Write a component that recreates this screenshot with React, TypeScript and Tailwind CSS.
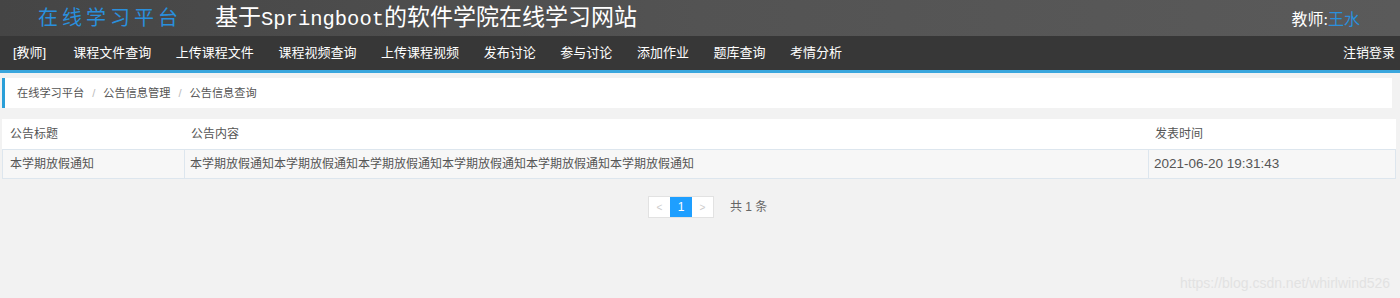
import React from 'react';

const navItems = ['课程文件查询', '上传课程文件', '课程视频查询', '上传课程视频', '发布讨论', '参与讨论', '添加作业', '题库查询', '考情分析'];

const crumbs = ['在线学习平台', '公告信息管理', '公告信息查询'];

const notices = [
  {
    title: '本学期放假通知',
    content: '本学期放假通知本学期放假通知本学期放假通知本学期放假通知本学期放假通知本学期放假通知',
    time: '2021-06-20 19:31:43',
  },
];

const App: React.FC = () => {
  return (
    <div className="w-[1400px] h-[298px] bg-[#f2f2f2] overflow-hidden relative font-['Liberation_Sans','Noto_Sans_CJK_SC',sans-serif]">
      {/* Header */}
      <div className="h-[36px] bg-gradient-to-r from-[#454545] via-[#535353] to-[#5a5a5a] flex items-center">
        <span className="ml-[38px] text-[20px] tracking-[4px] text-[#2a8fdc] font-['Liberation_Serif','Noto_Sans_CJK_SC',serif]">在线学习平台</span>
        <span className="ml-[33px] text-[23px] text-white font-['Liberation_Serif','Noto_Sans_CJK_SC',serif]">
          基于<span className="text-[20.5px] font-['Liberation_Mono','Noto_Sans_CJK_SC',monospace]">Springboot</span>的软件学院在线学习网站
        </span>
        <div className="ml-auto mr-[40px] mt-[4px] text-[16px] font-['Liberation_Serif','Noto_Sans_CJK_SC',serif]">
          <span className="text-white">教师:</span>
          <span className="text-[#2a8fdc]">王水</span>
        </div>
      </div>

      {/* Nav */}
      <div className="h-[34px] bg-[#373737] flex items-center text-white text-[13px]">
        <span className="ml-[13px]">[教师]</span>
        <div className="ml-[27px] flex gap-[24.6px]">
          {navItems.map(item => (
            <span key={item}>{item}</span>
          ))}
        </div>
        <span className="ml-auto mr-[5px]">注销登录</span>
      </div>
      <div className="h-[3px] bg-[#3aa6dd]" />

      {/* Breadcrumb */}
      <div className="mt-[5px] ml-[2px] w-[1390px] h-[30px] bg-white border-l-[3px] border-[#2a9fd8] flex items-center pl-[12px] text-[11.2px] text-[#555]">
        {crumbs.map((c, i) => (
          <React.Fragment key={c}>
            {i > 0 && <span className="mx-[8px] text-[#bbb]">/</span>}
            <span>{c}</span>
          </React.Fragment>
        ))}
      </div>

      {/* Table */}
      <div className="mt-[11px] ml-[2px] w-[1394px] text-[12px] text-[#555]">
        <div className="flex h-[30px] items-center bg-white">
          <div className="w-[183px] pl-[8px]">公告标题</div>
          <div className="w-[964px] pl-[6px]">公告内容</div>
          <div className="flex-1 pl-[6px]">发表时间</div>
        </div>
        {notices.map(n => (
          <div key={n.title} className="flex h-[30px] items-stretch bg-[#f7f7f7] border border-[#dde6ee]">
            <div className="w-[182px] pl-[7px] flex items-center border-r border-[#dde6ee]">{n.title}</div>
            <div className="w-[964px] pl-[5px] flex items-center border-r border-[#dde6ee]">{n.content}</div>
            <div className="flex-1 pl-[5px] flex items-center text-[13.5px]">{n.time}</div>
          </div>
        ))}
      </div>

      {/* Pagination */}
      <div className="mt-[17px] flex items-center ml-[648px] text-[12px]">
        <div className="flex h-[22px] border border-[#e2e2e2] bg-white">
          <span className="w-[21px] flex items-center justify-center text-[#ccc] text-[10px]">&lt;</span>
          <span className="w-[22px] flex items-center justify-center bg-[#1e9fff] text-white">1</span>
          <span className="w-[21px] flex items-center justify-center text-[#ccc] text-[10px]">&gt;</span>
        </div>
        <span className="ml-[16px] text-[#666]">共 1 条</span>
      </div>

      {/* Watermark */}
      <div className="absolute left-[1180px] top-[273px] text-[14px] text-[#e2e2e2]">https://blog.csdn.net/whirlwind526</div>
    </div>
  );
};

export default App;
